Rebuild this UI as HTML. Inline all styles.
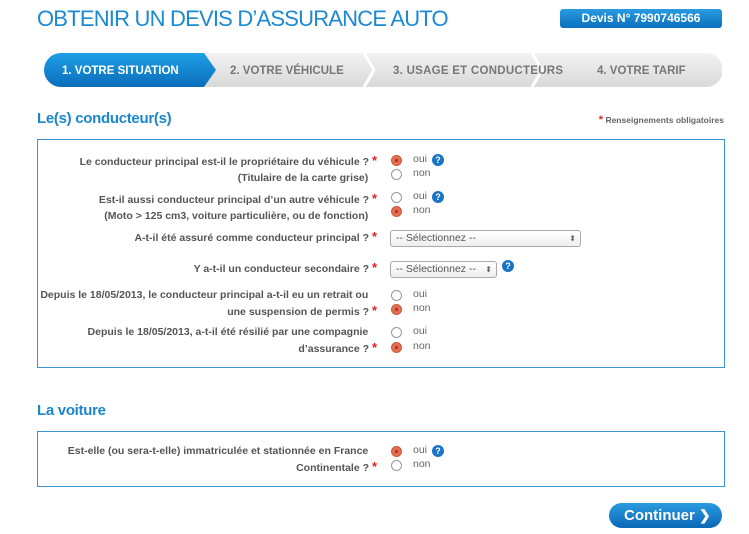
<!DOCTYPE html>
<html><head><meta charset="utf-8"><style>
*{margin:0;padding:0;box-sizing:border-box}
body{width:749px;height:534px;background:#fff;font-family:"Liberation Sans",Arial,sans-serif;position:relative;overflow:hidden}
.a{position:absolute;white-space:nowrap}
.title{left:37px;top:6px;font-size:22px;color:#1b8ad3;letter-spacing:-0.8px}
.badge{left:560px;top:9px;width:162px;height:19px;border-radius:3px;background:linear-gradient(#2a9be0,#0a6fbd);color:#fff;font-weight:bold;font-size:12px;text-align:center;line-height:19px}
.h{font-size:15px;font-weight:bold;color:#1b86cc;letter-spacing:-0.3px}
.box{border:1px solid #3a95d3;left:37px;width:688px}
.lbl{right:372px;font-size:10.5px;font-weight:bold;color:#555;text-align:right;line-height:16px}
.st{color:#d22;font-size:13px;font-weight:bold}
.r{width:11px;height:11px;border-radius:50%;border:1px solid #999;background:#fff;left:391px}
.r.on{background:radial-gradient(circle,#b33 0 1.5px,#e4704f 2px);border-color:#c75a3f}
.t{left:413px;font-size:10.5px;color:#666}
.q{width:12px;height:12px;border-radius:50%;background:#1a74c4;color:#fff;font-size:9px;font-weight:bold;text-align:center;line-height:12px}
.sel{height:17px;border:1px solid #aaa;border-radius:3px;background:linear-gradient(#fff,#eee);font-size:10.5px;color:#555;padding-left:5px;line-height:15px}
.sel:after{content:"⬍";position:absolute;right:4px;top:0;font-size:8px;color:#666}
</style></head><body>
<div class="a title">OBTENIR UN DEVIS D’ASSURANCE AUTO</div>
<div class="a badge">Devis N° 7990746566</div>

<svg class="a" style="left:44px;top:53px" width="678" height="34">
<defs><linearGradient id="g" x1="0" y1="0" x2="0" y2="1"><stop offset="0" stop-color="#f2f2f2"/><stop offset="1" stop-color="#d9d9d9"/></linearGradient>
<linearGradient id="b" x1="0" y1="0" x2="0" y2="1"><stop offset="0" stop-color="#1ea0e6"/><stop offset="1" stop-color="#0b6dbb"/></linearGradient></defs>
<path d="M16 0H662a16 16 0 0 1 0 34H16z" fill="url(#g)"/>
<path d="M320 0l10 17-10 17M152 0l10 17-10 17M488 0l10 17-10 17" stroke="#fff" stroke-width="3" fill="none"/>
<path d="M17 0H160l12 17-12 17H17a17 17 0 0 1 0-34z" fill="url(#b)"/>
<g font-family="Liberation Sans,Arial" font-weight="bold" font-size="11.5">
<text x="18" y="21" fill="#fff">1. VOTRE SITUATION</text>
<text x="186" y="21" fill="#777">2. VOTRE VÉHICULE</text>
<text x="349" y="21" fill="#777" textLength="170">3. USAGE ET CONDUCTEURS</text>
<text x="553" y="21" fill="#777">4. VOTRE TARIF</text></g>
</svg>

<div class="a h" style="left:37px;top:110px">Le(s) conducteur(s)</div>
<div class="a" style="right:25px;top:114px;font-size:8.5px;font-weight:bold;color:#666"><span style="color:#d22;font-size:11px">*</span> Renseignements obligatoires</div>

<div class="a box" style="top:139px;height:229px"></div>

<div class="a lbl" style="top:153px">Le conducteur principal est-il le propriétaire du véhicule ? <span class="st">*</span><br>(Titulaire de la carte grise)&nbsp;&nbsp;&nbsp;</div>
<div class="a r on" style="top:155px"></div><div class="a t" style="top:153px">oui</div><div class="a q" style="left:432px;top:154px">?</div>
<div class="a r" style="top:169px"></div><div class="a t" style="top:167px">non</div>

<div class="a lbl" style="top:191px">Est-il aussi conducteur principal d’un autre véhicule ? <span class="st">*</span><br>(Moto &gt; 125 cm3, voiture particulière, ou de fonction)&nbsp;&nbsp;&nbsp;</div>
<div class="a r" style="top:192px"></div><div class="a t" style="top:190px">oui</div><div class="a q" style="left:432px;top:191px">?</div>
<div class="a r on" style="top:206px"></div><div class="a t" style="top:204px">non</div>

<div class="a lbl" style="top:229px">A-t-il été assuré comme conducteur principal ? <span class="st">*</span></div>
<div class="a sel" style="left:390px;top:230px;width:191px">-- Sélectionnez --</div>

<div class="a lbl" style="top:260px">Y a-t-il un conducteur secondaire ? <span class="st">*</span></div>
<div class="a sel" style="left:390px;top:261px;width:107px">-- Sélectionnez --</div>
<div class="a q" style="left:502px;top:260px">?</div>

<div class="a lbl" style="top:287px">Depuis le 18/05/2013, le conducteur principal a-t-il eu un retrait ou&nbsp;&nbsp;&nbsp;<br>une suspension de permis ? <span class="st">*</span></div>
<div class="a r" style="top:290px"></div><div class="a t" style="top:288px">oui</div>
<div class="a r on" style="top:304px"></div><div class="a t" style="top:302px">non</div>

<div class="a lbl" style="top:324px">Depuis le 18/05/2013, a-t-il été résilié par une compagnie&nbsp;&nbsp;&nbsp;<br>d’assurance ? <span class="st">*</span></div>
<div class="a r" style="top:327px"></div><div class="a t" style="top:325px">oui</div>
<div class="a r on" style="top:342px"></div><div class="a t" style="top:340px">non</div>

<div class="a h" style="left:37px;top:402px">La voiture</div>
<div class="a box" style="top:431px;height:56px"></div>
<div class="a lbl" style="top:443px">Est-elle (ou sera-t-elle) immatriculée et stationnée en France&nbsp;&nbsp;&nbsp;<br>Continentale ? <span class="st">*</span></div>
<div class="a r on" style="top:446px"></div><div class="a t" style="top:444px">oui</div><div class="a q" style="left:432px;top:445px">?</div>
<div class="a r" style="top:460px"></div><div class="a t" style="top:458px">non</div>

<div class="a" style="left:609px;top:503px;width:113px;height:25px;border-radius:13px;background:linear-gradient(#2a9be0,#0a68b5);color:#fff;font-weight:bold;font-size:15px;line-height:25px;padding-left:15px">Continuer <span style="font-size:14px">❯</span></div>
</body></html>
